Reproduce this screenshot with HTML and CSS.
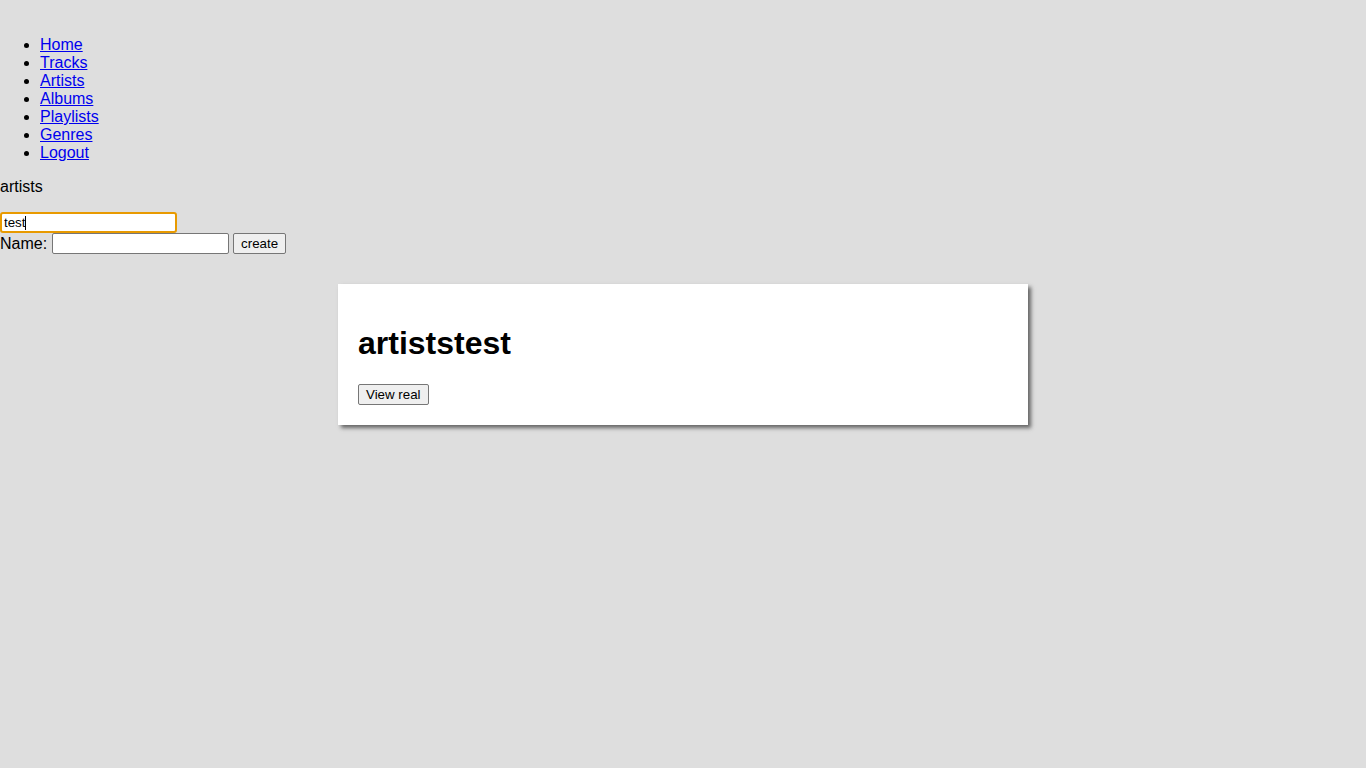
FILE: index.html
```html
<!DOCTYPE html>
<html>
<head>
<meta charset="utf-8">
<link rel="stylesheet" href="styles.css">
</head>
<body>
<nav class="nav">
  <ul class="nav-list">
    <li><a href="#">Home</a></li>
    <li><a href="#">Tracks</a></li>
    <li><a href="#">Artists</a></li>
    <li><a href="#">Albums</a></li>
    <li><a href="#">Playlists</a></li>
    <li><a href="#">Genres</a></li>
    <li><a href="#">Logout</a></li>
  </ul>
</nav>
<p class="title">artists</p>
<div class="search"><input class="field field-focus" type="text" value="test"><span class="caret"></span></div>
<form class="create">
  <label>Name: </label><input class="field" type="text"> <button class="btn" type="button">create</button>
</form>
<div class="card">
  <h1 class="card-title">artiststest</h1>
  <button class="btn" type="button">View real</button>
</div>
</body>
</html>
```
FILE: styles.css
```css
html, body {
  background: #dedede;
}
body {
  margin: 0;
  padding-bottom: 20px;
  font-family: "Liberation Sans", Arial, sans-serif;
  font-size: 16px;
  line-height: 18px;
  color: #000;
}
.nav {
  padding-top: 20px;
}
.nav-list {
  margin: 16px 0;
  padding-left: 40px;
}
.nav-list a {
  color: #0000ee;
}
.title {
  margin: 0 0 16px 0;
}
.search {
  position: relative;
  height: 21px;
  line-height: 0;
}
.field {
  box-sizing: border-box;
  width: 177px;
  height: 21px;
  font-family: "Liberation Sans", Arial, sans-serif;
  font-size: 13.33px;
  padding: 1px 2px;
  border: 1px solid #767676;
  border-radius: 2px;
  background: #fff;
  vertical-align: top;
  margin: 0;
}
.field-focus {
  border: 2px solid #e89a00;
  border-radius: 3px;
  padding: 0 1px 0 2px;
  outline: none;
}
.caret {
  position: absolute;
  left: 25px;
  top: 4px;
  width: 1px;
  height: 14px;
  background: #000;
}
.create {
  margin: 0;
  height: 21px;
  line-height: 21px;
}
.create label {
  vertical-align: top;
}
.btn {
  box-sizing: border-box;
  height: 21px;
  font-family: "Liberation Sans", Arial, sans-serif;
  font-size: 13.33px;
  padding: 0 7px;
  border: 1px solid #767676;
  border-radius: 2px;
  background: #efefef;
  color: #000;
  vertical-align: top;
  margin: 0;
}
.card {
  width: 650px;
  margin: 30px auto 0;
  padding: 20px;
  background: #fff;
  box-shadow: 3px 3px 4px rgba(0, 0, 0, 0.55);
}
.card-title {
  font-size: 32px;
  line-height: 37px;
  margin: 21px 0 22px;
}
.card .btn {
  display: block;
}
```
